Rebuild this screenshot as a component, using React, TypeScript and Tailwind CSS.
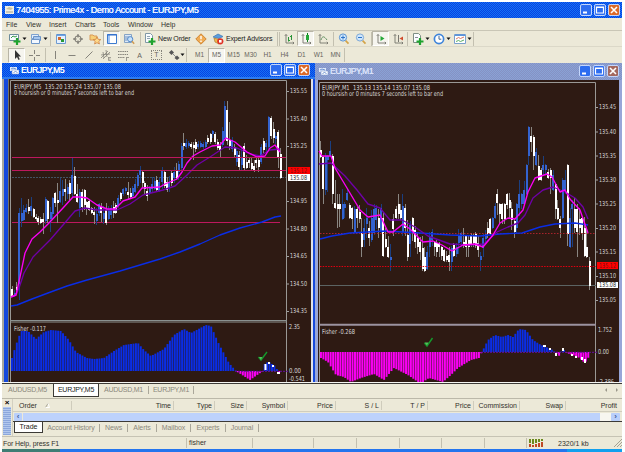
import type { ReactNode } from "react";
import clsx from "clsx";

type Point = [number, number];
// x, high, body top, body bottom, low, rising
type Candle = [number, number, number, number, number, 0 | 1];

const beige = "bg-[#ece9d8]";
const activeTitle =
  "bg-[repeating-conic-gradient(#0a3fe2_0_25%,#1274f4_0_50%)] bg-[length:2px_2px]";
const idleTitle = "bg-[repeating-conic-gradient(#8592c4_0_25%,#8aa2d6_0_50%)] bg-[length:2px_2px]";

const leftCandles: Candle[] = [
  [11.5, 286, 289, 296, 297, 0], [14, 290, 293, 296, 297, 1], [16.3, 282, 287, 290, 295, 0], [18.6, 208, 213, 284, 300, 1],
  [21, 198, 213, 221, 227, 1], [23.2, 205, 210, 220, 221, 1], [25.6, 204, 208, 212, 213, 1], [28, 199, 207, 211, 214, 0],
  [30.6, 197, 206, 211, 216, 1], [33, 208, 209, 217, 218, 0], [35.5, 214, 217, 219, 221, 0], [37.8, 216, 218, 222, 225, 0],
  [40.2, 217, 219, 223, 224, 0], [42.6, 213, 219, 222, 234, 0], [45, 197, 199, 221, 224, 1], [47.4, 200, 201, 219, 223, 0],
  [50, 207, 212, 219, 232, 1], [52.3, 197, 198, 214, 219, 1], [54.7, 192, 193, 203, 207, 0], [57.2, 183, 200, 203, 223, 0],
  [59.7, 178, 191, 202, 203, 1], [62.1, 180, 189, 196, 205, 1], [64.6, 179, 189, 192, 201, 0], [67, 184, 187, 194, 199, 1],
  [69.4, 180, 183, 194, 200, 0], [71.9, 158, 175, 193, 197, 1], [74.3, 167, 176, 194, 195, 0], [76.8, 184, 194, 202, 203, 0],
  [79.3, 189, 192, 208, 217, 1], [81.6, 189, 192, 207, 212, 0], [84, 189, 190, 205, 210, 0], [86.3, 201, 202, 208, 215, 0],
  [88.7, 200, 201, 210, 211, 0], [91.2, 207, 208, 213, 214, 0], [93.7, 207, 212, 215, 224, 0], [96.1, 208, 214, 221, 225, 1],
  [98.5, 203, 204, 213, 216, 1], [100.9, 203, 206, 213, 222, 0], [103.3, 206, 213, 219, 224, 1], [105.7, 203, 210, 223, 225, 0],
  [108.1, 206, 209, 219, 220, 1], [110.6, 205, 208, 215, 219, 1], [113, 201, 207, 213, 218, 0], [115.4, 203, 205, 213, 214, 0],
  [117.8, 195, 198, 206, 208, 1], [120.2, 192, 193, 199, 201, 0], [122.7, 188, 189, 194, 196, 1], [125.1, 187, 188, 191, 194, 1],
  [127.5, 182, 192, 195, 199, 0], [130, 188, 193, 197, 199, 0], [132.3, 186, 188, 196, 197, 1], [134.7, 179, 184, 192, 193, 1],
  [137.1, 173, 175, 186, 188, 1], [139.5, 166, 170, 175, 183, 1], [142, 171, 172, 183, 188, 0], [144.4, 181, 183, 189, 195, 0],
  [146.8, 185, 191, 196, 201, 0], [149.2, 186, 188, 193, 195, 1], [151.6, 177, 184, 189, 192, 1], [154, 177, 181, 189, 190, 1],
  [156.4, 176, 180, 190, 192, 0], [158.9, 178, 182, 191, 192, 1], [161.7, 167, 170, 182, 189, 1], [164.2, 170, 172, 186, 188, 0],
  [166.5, 177, 182, 190, 192, 0], [168.8, 176, 182, 188, 192, 1], [171.2, 171, 173, 183, 186, 0], [173.5, 167, 172, 178, 183, 1],
  [176, 163, 170, 178, 180, 0], [178.4, 161, 164, 172, 180, 1], [181.1, 143, 146, 168, 170, 1], [183.4, 133, 143, 146, 150, 0],
  [185.8, 139, 143, 147, 149, 1], [188.2, 141, 143, 146, 148, 1], [190.6, 142, 144, 147, 149, 0], [193, 142, 145, 148, 160, 0],
  [195.4, 139, 142, 149, 152, 0], [197.8, 141, 144, 147, 149, 1], [200.2, 141, 143, 147, 148, 1], [202.6, 142, 144, 147, 149, 1],
  [205, 140, 142, 147, 148, 1], [207.4, 135, 138, 142, 144, 0], [210, 133, 134, 142, 144, 0], [212.4, 130, 131, 134, 138, 1],
  [214.8, 132, 134, 142, 144, 0], [217.2, 139, 142, 148, 150, 0], [219.6, 142, 146, 150, 157, 0], [222, 127, 131, 145, 147, 1],
  [224.3, 101, 106, 138, 140, 1], [226.7, 101, 110, 141, 145, 0], [229.1, 122, 140, 146, 150, 0], [231.6, 137, 140, 149, 152, 1],
  [234, 144, 147, 155, 158, 0], [236.4, 148, 151, 162, 166, 1], [238.9, 151, 155, 167, 170, 0], [241.3, 147, 157, 165, 171, 1],
  [243.7, 143, 146, 168, 170, 0], [246.1, 155, 162, 168, 169, 0], [248.5, 157, 160, 163, 168, 0], [251, 157, 163, 169, 171, 0],
  [253.5, 160, 166, 170, 172, 0], [255.9, 157, 160, 163, 168, 0], [258.3, 156, 160, 167, 172, 0], [260.8, 144, 147, 162, 164, 1],
  [263.3, 138, 141, 150, 153, 0], [265.7, 140, 143, 147, 154, 1], [268.2, 116, 117, 147, 149, 1], [270.6, 116, 118, 136, 139, 0],
  [273, 122, 129, 138, 143, 0], [275.4, 132, 136, 139, 144, 1], [277.7, 130, 132, 158, 168, 0], [280.2, 148, 154, 178, 179, 0],
];

const rightCandles: Candle[] = [
  [320.2, 141, 150, 157, 158, 0], [322.6, 156, 157, 189, 204, 0], [325, 153, 156, 190, 195, 1], [327.4, 155, 156, 160, 192, 1],
  [329.7, 141, 151, 156, 157, 1], [332.1, 154, 156, 194, 204, 0], [334.6, 180, 203, 208, 209, 0], [337, 194, 204, 209, 228, 0],
  [339.4, 194, 204, 209, 227, 0], [342, 189, 204, 219, 220, 1], [344.4, 202, 204, 208, 218, 1], [346.8, 189, 193, 200, 201, 1],
  [349.2, 203, 205, 218, 219, 0], [351.6, 207, 208, 219, 229, 0], [354.2, 206, 209, 232, 233, 1], [356.6, 207, 209, 218, 228, 0],
  [359, 205, 212, 219, 223, 0], [361.3, 218, 233, 247, 257, 0], [363.8, 219, 228, 240, 247, 1], [366.2, 208, 218, 224, 238, 1],
  [368.7, 221, 228, 238, 246, 0], [371.1, 210, 218, 240, 242, 1], [373.5, 204, 209, 233, 235, 1], [375.9, 205, 208, 220, 229, 1],
  [378.3, 209, 218, 228, 238, 0], [380.5, 204, 208, 232, 233, 1], [382.9, 212, 218, 256, 257, 0], [385.3, 228, 239, 247, 248, 0],
  [387.8, 236, 247, 257, 258, 0], [390.4, 244, 257, 260, 271, 1], [392.8, 214, 219, 229, 236, 0], [395.6, 206, 209, 218, 219, 0],
  [398, 194, 204, 214, 219, 0], [400.2, 204, 210, 218, 220, 0], [402.4, 194, 206, 232, 236, 1], [404.9, 204, 208, 228, 236, 0],
  [407.4, 220, 235, 257, 261, 0], [409.8, 221, 225, 244, 257, 1], [412.3, 217, 218, 233, 241, 0], [414.7, 226, 230, 242, 248, 0],
  [417.1, 232, 238, 247, 254, 0], [419.5, 237, 242, 252, 260, 0], [422, 236, 248, 269, 271, 0], [424.4, 247, 257, 271, 272, 0],
  [426.8, 246, 252, 269, 270, 1], [429.2, 232, 237, 247, 257, 1], [431.6, 229, 232, 240, 246, 1], [434, 241, 242, 247, 256, 0],
  [436.4, 240, 243, 252, 257, 0], [438.8, 242, 243, 247, 257, 0], [441.2, 246, 247, 256, 260, 0], [443.6, 249, 250, 261, 262, 0],
  [446, 251, 256, 260, 262, 0], [448.6, 247, 255, 262, 271, 0], [451, 246, 248, 262, 271, 1], [453.4, 243, 245, 256, 257, 0],
  [456, 243, 247, 254, 257, 1], [458.4, 229, 235, 243, 254, 1], [460.8, 232, 233, 242, 247, 1], [463.3, 228, 242, 246, 248, 0],
  [465.7, 235, 236, 247, 257, 0], [468.2, 235, 240, 247, 257, 0], [470.6, 233, 235, 245, 247, 0], [473, 233, 236, 243, 247, 0],
  [475.4, 232, 234, 246, 248, 0], [477.8, 236, 243, 250, 257, 0], [480.1, 252, 256, 260, 271, 1], [482.6, 234, 238, 248, 257, 1],
  [485, 230, 234, 239, 244, 1], [487.3, 222, 228, 234, 238, 0], [489.7, 218, 219, 234, 235, 0], [492.1, 217, 218, 228, 229, 1],
  [494.5, 203, 206, 218, 219, 1], [496.9, 189, 194, 203, 215, 0], [499.3, 203, 204, 214, 224, 0], [501.7, 203, 204, 219, 224, 0],
  [504.1, 203, 204, 219, 224, 0], [506.6, 193, 194, 205, 209, 0], [509, 193, 200, 208, 218, 0], [511.4, 202, 209, 220, 230, 0],
  [514, 219, 221, 232, 238, 0], [516.4, 203, 204, 228, 234, 1], [518.8, 180, 194, 208, 216, 1], [521.2, 193, 194, 204, 209, 1],
  [523.6, 181, 190, 204, 206, 1], [526, 164, 165, 194, 195, 1], [528.4, 126, 127, 156, 165, 1], [530.8, 127, 136, 142, 152, 0],
  [533.2, 135, 137, 156, 170, 0], [535.7, 148, 152, 165, 166, 1], [538.1, 155, 166, 180, 181, 0], [540.5, 168, 170, 180, 181, 0],
  [542.9, 156, 165, 170, 175, 1], [545.3, 164, 165, 170, 175, 1], [547.8, 169, 172, 178, 179, 0], [550.2, 168, 170, 178, 194, 0],
  [552.6, 170, 175, 190, 191, 1], [555, 183, 184, 209, 219, 0], [557.4, 200, 208, 219, 220, 0], [559.8, 216, 219, 228, 238, 0],
  [562.3, 178, 180, 218, 219, 1], [564.7, 170, 180, 190, 194, 1], [567.1, 164, 165, 234, 246, 0], [569.5, 208, 218, 247, 248, 1],
  [571.9, 200, 204, 209, 247, 1], [574.3, 198, 209, 228, 233, 0], [576.7, 204, 209, 232, 257, 0], [579.1, 208, 219, 228, 235, 0],
  [581.5, 217, 218, 233, 240, 0], [584, 217, 228, 256, 257, 0], [586.4, 228, 247, 257, 258, 0], [589, 257, 261, 286, 290, 0],
];

const leftFast: Point[] = [[11, 297], [16, 295], [20, 277], [25, 253], [32, 239], [40, 232], [48, 224], [63, 208], [73, 197], [80, 197], [87, 198], [97, 205], [107, 209], [115, 209], [123, 201], [135, 197], [142, 188], [160, 187], [165, 184], [177, 179], [182, 172], [187, 163], [193, 156], [200, 152], [212, 146], [220, 145], [226, 138], [235, 142], [247, 152], [257, 157], [265, 156], [270, 148], [275, 145], [280, 152]];
const leftSlow: Point[] = [[11, 297], [16, 295], [19, 288], [24, 273], [33, 257], [50, 240], [63, 225], [75, 211], [85, 208], [97, 210], [117, 210], [130, 204], [143, 195], [163, 190], [175, 186], [187, 175], [197, 165], [210, 157], [225, 147], [237, 148], [250, 154], [260, 156], [270, 150], [280, 149]];
const leftTrend: Point[] = [[11, 306], [17, 305], [32, 299], [48, 293], [67, 286], [87, 280], [120, 271], [160, 259], [180, 252], [200, 244], [220, 235], [240, 228], [262, 222], [275, 217], [281, 216]];

const rightFast: Point[] = [[319, 151], [322, 156], [331, 156], [335, 168], [347, 188], [360, 210], [368, 217], [380, 215], [388, 232], [393, 232], [403, 224], [410, 229], [417, 236], [423, 242], [433, 241], [442, 245], [452, 251], [463, 245], [475, 244], [483, 247], [493, 235], [500, 223], [508, 218], [515, 219], [523, 210], [528, 192], [535, 178], [547, 174], [552, 177], [560, 192], [565, 190], [570, 199], [580, 210], [588, 233]];
const rightSlow: Point[] = [[319, 164], [331, 163], [345, 176], [357, 190], [368, 204], [380, 208], [390, 220], [402, 220], [415, 227], [428, 236], [450, 244], [470, 245], [484, 244], [497, 232], [508, 227], [518, 223], [525, 215], [533, 198], [543, 190], [553, 187], [565, 192], [575, 198], [583, 207], [588, 219]];
const rightTrend: Point[] = [[320, 239], [332, 236], [350, 233], [385, 231], [420, 233], [450, 235], [480, 236], [500, 234], [522, 233], [540, 227], [555, 224], [575, 223], [588, 225]];

const leftFisher: Point[] = [[11, 358], [15, 345], [20, 331], [27, 331], [35, 339], [43, 332], [50, 330], [60, 331], [68, 340], [75, 352], [86, 358], [93, 359], [103, 358], [113, 351], [123, 345], [137, 343], [143, 350], [150, 356], [163, 349], [173, 335], [183, 329], [190, 333], [205, 325], [210, 326], [217, 342], [228, 363], [235, 371], [249, 380], [262, 371], [264, 363], [268, 362], [274, 366], [277, 371], [280, 374]];
const rightFisher: Point[] = [[320, 358], [327, 362], [335, 375], [343, 377], [350, 382], [360, 378], [373, 374], [383, 380], [393, 368], [407, 375], [417, 382], [422, 382], [428, 378], [442, 382], [450, 375], [457, 368], [470, 360], [478, 358], [481, 352], [487, 340], [494, 335], [501, 337], [507, 335], [512, 337], [518, 329], [525, 330], [532, 340], [540, 345], [550, 349], [554, 352], [558, 356], [562, 349], [566, 353], [577, 357], [584, 363], [589, 355]];

function levelAt(points: Point[], x: number) {
  const i = points.findIndex(([px]) => px >= x);
  if (i < 0) return points[points.length - 1][1];
  if (i === 0) return points[0][1];
  const [x0, y0] = points[i - 1];
  const [x1, y1] = points[i];
  return y0 + ((y1 - y0) * (x - x0)) / (x1 - x0);
}

function Candles({ data }: { data: Candle[] }) {
  return (
    <g shapeRendering="crispEdges">
      {data.map(([x, high, top, bottom, low, up]) => (
        <g key={x}>
          <rect x={x} y={high} width={1} height={low - high} fill={up ? "#1b3f80" : "#8a8681"} />
          <rect x={x - 0.5} y={top} width={2} height={bottom - top} fill={up ? "#3463cf" : "#ffffff"} />
        </g>
      ))}
    </g>
  );
}

function Line({ points, color }: { points: Point[]; color: string }) {
  return <polyline points={points.join(" ")} fill="none" stroke={color} strokeWidth={1.35} strokeLinejoin="round" />;
}

function Fisher({ points, base }: { points: Point[]; base: number }) {
  const first = points[0][0];
  const last = points[points.length - 1][0];
  const count = Math.floor((last - first) / 2.43) + 1;
  return (
    <g>
      {Array.from({ length: count }, (_, i) => {
        const x = first + i * 2.43;
        const y = levelAt(points, x);
        return (
          <rect
            key={i}
            x={x}
            y={Math.min(y, base)}
            width={1.95}
            height={Math.max(Math.abs(base - y), 0.6)}
            fill={y > base ? "#fb00f5" : "#0a2de6"}
          />
        );
      })}
    </g>
  );
}

function Label({ x, y, w, children, fill = "#d6d6d6" }: { x: number; y: number; w: number; children: string; fill?: string }) {
  return (
    <text x={x} y={y + 2.4} textLength={w} lengthAdjust="spacingAndGlyphs" fill={fill} fontSize={6.8} xmlSpace="preserve">
      {children}
    </text>
  );
}

function Tick({ y, x }: { y: number; x: number }) {
  return <rect x={x} y={y} width={2} height={1} fill="#a0a0a0" />;
}

const chartFont = "block shrink-0 font-['DejaVu_Sans_Condensed','DejaVu_Sans',sans-serif]";

function LeftChart() {
  const prices: [string, number][] = [
    ["135.55", 91], ["135.40", 118.5], ["135.25", 146], ["134.95", 201], ["134.80", 228.5], ["134.65", 256], ["134.50", 283.5], ["134.35", 311],
  ];
  return (
    <svg width={302} height={303} viewBox="9 79 302 303" className={chartFont}>
      <rect x={9} y={79} width={302} height={303} fill="#2e1a13" />
      <path d="M10.5 382V80.5H286.5V382" fill="none" stroke="#9a9895" />
      <path d="M10 320.5H287M10 322H287" stroke="#8b9190" />
      <path d="M12 157.5H286M12 170.5H286M12 222.5H280" stroke="#bd185e" />
      <path d="M12 177.5H286" stroke="#425363" strokeDasharray="2 1" />
      <Candles data={leftCandles} />
      <Line points={leftTrend} color="#0a2de6" />
      <Line points={leftSlow} color="#6f00a8" />
      <Line points={leftFast} color="#fb00f5" />
      <path d="M180 157.5H286M160 170.5H286" stroke="#bd185e" />
      <Fisher points={leftFisher} base={371} />
      <path d="M235 371.3H288" stroke="#6310a0" strokeDasharray="2 1" />
      <path d="M264.5 364h2v6h-2zM268 362h2v2h-2zM272 365h2v2h-2zM277 372h3v2h-3z" fill="#fff" />
      <path d="M258.5 357l2.5 3 6-8" fill="none" stroke="#149a2c" strokeWidth={1.4} />
      <path d="M259 357l2 3 1.2-3z" fill="#55c45d" />
      {prices.map(([text, y]) => (
        <g key={text}>
          <Tick x={287} y={y} />
          <Label x={290} y={y} w={17}>{text}</Label>
        </g>
      ))}
      <rect x={288} y={167} width={22} height={7} fill="#ff0000" />
      <Label x={290} y={170.5} w={17} fill="#7a1010">135.12</Label>
      <rect x={288} y={174} width={22} height={7} fill="#ffffff" />
      <Label x={290} y={177.5} w={17} fill="#303030">135.08</Label>
      <Label x={289} y={326.5} w={11}>2.35</Label>
      <Label x={289} y={371} w={12}>0.00</Label>
      <Label x={289} y={378.5} w={16}>-0.541</Label>
      <Label x={14} y={86.5} w={107}>EURJPY,M5  135.20 135.24 135.07 135.08</Label>
      <Label x={14} y={93} w={120}>0 hoursish or 0 minutes 7 seconds left to bar end</Label>
      <Label x={14} y={328.5} w={32}>Fisher -0.117</Label>
    </svg>
  );
}

function RightChart() {
  const prices: [string, number][] = [
    ["135.45", 107], ["135.40", 131.5], ["135.35", 155.5], ["135.30", 179.5], ["135.25", 203.5], ["135.20", 228], ["135.15", 251.5], ["135.10", 276], ["135.05", 300],
  ];
  return (
    <svg width={301} height={302} viewBox="318 80 301 302" className={chartFont}>
      <rect x={318} y={80} width={301} height={302} fill="#2e1a13" />
      <path d="M319.5 382V82.5H595.5V382" fill="none" stroke="#9a9895" />
      <path d="M320 324.7H596" stroke="#9c93a0" strokeWidth={2} />
      <path d="M320 285.5H596" stroke="#5c6463" />
      <Candles data={rightCandles} />
      <path d="M320 233.5H596" stroke="#a8232c" strokeDasharray="1.5 1.5" />
      <path d="M320 266.5H596" stroke="#e00010" strokeDasharray="1.5 1.2" />
      <Line points={rightTrend} color="#0a2de6" />
      <Line points={rightSlow} color="#6f00a8" />
      <Line points={rightFast} color="#fb00f5" />
      <Fisher points={rightFisher} base={352} />
      <path d="M481 352.3H598" stroke="#6310a0" strokeDasharray="2 1" />
      <path d="M543 345h3v2h-3zM549 348h2v2h-2zM555 353h2v3h-2zM562 348h2v3h-2zM571 354h2v2h-2zM575 356h2v2h-2zM581 357h2v3h-2zM584 359h2v4h-2z" fill="#fff" />
      <path d="M424.5 343l2.5 3 5.5-8" fill="none" stroke="#149a2c" strokeWidth={1.4} />
      <path d="M424.5 342.5l2.5 3 1.5-3z" fill="#55c45d" />
      {prices.map(([text, y]) => (
        <g key={text}>
          <Tick x={596} y={y} />
          <Label x={599} y={y} w={17}>{text}</Label>
        </g>
      ))}
      <rect x={597} y={262} width={21} height={7} fill="#ff0000" />
      <Label x={599} y={265.5} w={17} fill="#7a1010">135.12</Label>
      <rect x={597} y={282} width={21} height={6} fill="#ffffff" />
      <Label x={599} y={285} w={17} fill="#303030">135.08</Label>
      <Label x={598} y={330} w={14}>1.752</Label>
      <Label x={598} y={351.5} w={11}>0.00</Label>
      <Label x={598} y={381.8} w={16}>-2.386</Label>
      <Label x={322} y={87.5} w={108}>EURJPY,M1  135.13 135.14 135.07 135.08</Label>
      <Label x={322} y={94} w={121}>0 hoursish or 0 minutes 7 seconds left to bar end</Label>
      <Label x={322} y={332} w={33}>Fisher -0.268</Label>
    </svg>
  );
}

function WindowButtons({ idle = false }: { idle?: boolean }) {
  const box = "h-3 w-3 rounded-[2px] border border-[#c4d6fb]";
  return (
    <div className="ml-auto flex gap-[2px]">
      <svg viewBox="0 0 10 10" className={clsx(box, "bg-[#2d6df0]")}>
        <path d="M2 7.5h4" stroke="#fff" strokeWidth={2} />
      </svg>
      <svg viewBox="0 0 10 10" className={clsx(box, "bg-[#2d6df0]")}>
        <path d="M1.500 2h7v6h-7zM1 2.500h8" fill="none" stroke="#fff" strokeWidth={1.2} />
      </svg>
      <svg viewBox="0 0 10 10" className={clsx(box, idle ? "bg-[#a3685f]" : "bg-[#dc6a28]")}>
        <path d="M2 2l6 6M8 2l-6 6" stroke="#fff" strokeWidth={1.6} />
      </svg>
    </div>
  );
}

function ChartIcon() {
  return (
    <svg viewBox="0 0 9 9" className="h-[9px] w-[9px]">
      <path d="M0 1h7v4H0z" fill="#dfe9fb" />
      <path d="M2 4h7v4H2z" fill="#fff" stroke="#7f9bd0" strokeWidth={0.6} />
      <path d="M1 3l2-1 3 1M3.5 6.5l2-1 2 1" fill="none" stroke="#4d78c4" strokeWidth={0.8} />
    </svg>
  );
}

function Icon({ children }: { children: ReactNode }) {
  return (
    <svg viewBox="0 0 12 12" fill="none" className="h-3 w-3 shrink-0">
      {children}
    </svg>
  );
}

function Slot({ children, pressed = false }: { children: ReactNode; pressed?: boolean }) {
  return (
    <div
      className={clsx(
        "flex h-[15px] w-[17px] shrink-0 items-center justify-center",
        pressed && "border border-[#b8b5a6] border-r-white border-b-white bg-[#f6f5ef]",
      )}
    >
      {children}
    </div>
  );
}

function Caret({ className }: { className?: string }) {
  return (
    <svg viewBox="0 0 5 4" className={clsx("h-1 w-[5px] shrink-0", className ?? "ml-px")}>
      <path d="M.5 .5h4L2.500 3z" fill="#111" />
    </svg>
  );
}

function Sep({ className }: { className?: string }) {
  return <div className={clsx("h-[14px] w-px shrink-0 bg-[#c3c0b0]", className)} />;
}

const plus = <path d="M8 5v7M4.5 8.5h7" stroke="#1fa32e" strokeWidth={2.2} />;
const axes = <path d="M3 1.500v8.500h8M1.800 2.800L3 1.500l1.200 1.300M9.800 8.800L11 10l-1.200 1.200" stroke="#77766e" strokeWidth={0.9} />;

function MainToolbar() {
  return (
    <div className="flex h-4 items-center border-t border-[#c9c6b6] pl-[7px]">
      <Icon><path d="M.5 1.5h9v6h-9z" fill="#f7fbff" stroke="#6d8c9c" /><path d="M2 5l2-2 2 1 2-1" stroke="#3a9a4a" />{plus}</Icon>
      <Caret />
      <div className="w-[3px]" />
      <Icon><path d="M1.500 1.500h7v4h-7z" fill="#e3eefb" stroke="#7ea2cf" /><path d="M3.500 3.500h7v4h-7z" fill="#a6c6ee" stroke="#6b94c8" /><path d="M1.5 6.5h8v4h-8z" fill="#f3f8ff" stroke="#6e96c8" /></Icon>
      <Caret />
      <Sep className="mr-px ml-[2px]" />
      <Slot><Icon><path d="M1.5 1.5h9v9h-9z" fill="#e4f0ff" stroke="#6f9bd0" /><path d="M2 2.2h8" stroke="#3b80d6" /><path d="M3 4h3v3H3z" fill="#d36b2c" /><path d="M6 6h3v3H6z" fill="#269936" /></Icon></Slot>
      <Slot><Icon><circle cx={6} cy={6} r={3.2} stroke="#77756e" /><path d="M6 1v3.500M6 7.500V11M1 6h3.500M7.500 6H11" stroke="#66645e" /></Icon></Slot>
      <Slot><Icon><path d="M1 2h3l1 1h3v4H1z" fill="#f7cf77" stroke="#d99a58" /><path d="M8 4l1.2 2.3 2.6.3-2 1.7.6 2.7L8 9.7 5.6 11l.6-2.7-2-1.7 2.6-.3z" fill="#ffd98a" stroke="#cf8240" strokeWidth={0.8} /></Icon></Slot>
      <Slot pressed><Icon><path d="M1.500 1.500h9v9h-9z" fill="#fff" stroke="#3d7bd0" /><path d="M2 2h2v8H2z" fill="#9fc3f5" /><path d="M1 2h10" stroke="#2f6dcc" /></Icon></Slot>
      <Slot><Icon><path d="M1.5 1.5h7v8h-7z" fill="#dce9f8" stroke="#85a3c5" /><path d="M3 3v5M5 3v4" stroke="#7093bd" /><circle cx={7.2} cy={6.2} r={2.6} fill="#c6e1fa" stroke="#5288c8" /><path d="M9 8.3l2.2 2.5" stroke="#cf9950" strokeWidth={1.5} /></Icon></Slot>
      <Sep className="mr-[3px] ml-[3px]" />
      <Icon><path d="M1.5.5h5l2 2v7h-7z" fill="#fafdff" stroke="#8198a6" /><path d="M3 3.5h3M3 5.5h3" stroke="#91a5b5" />{plus}</Icon>
      <span className="ml-[2px] w-[34px] text-[#222] tracking-[-0.15px]">New Order</span>
      <Slot><Icon><path d="M6 .8l5.2 5.2L6 11.2.8 6z" fill="#f0ac54" stroke="#cf8636" /><path d="M6 3v3.2M6 7.5V9" stroke="#fff" strokeWidth={1.4} /></Icon></Slot>
      <Slot><Icon><path d="M1 4l5-3 5 2.5-4 2z" fill="#5c9edd" stroke="#3a74b4" strokeWidth={0.7} /><path d="M2 5l5 1.5V11L3 9z" fill="#f0b64c" stroke="#a97c33" strokeWidth={0.7} /><circle cx={8.3} cy={8.3} r={3.1} fill="#df3227" /><path d="M7 7h2.6v2.6H7z" fill="#fff" /></Icon></Slot>
      <span className="w-[51px] text-[#222] tracking-[-0.15px]">Expert Advisors</span>
      <Sep /><Sep className="ml-px" />
      <Slot><Icon>{axes}<path d="M5.500 4v4.500M5.500 7.500H7M8.500 2v5M7 3.500h1.500" stroke="#2a9438" /></Icon></Slot>
      <Slot pressed><Icon>{axes}<path d="M7.500 0v9" stroke="#0d7e1d" /><path d="M6 2h3v5H6z" fill="#25a838" /></Icon></Slot>
      <Slot><Icon>{axes}<path d="M4 7c1.500-4.500 3-4 6 0" stroke="#679366" /></Icon></Slot>
      <Sep className="mr-px ml-[2px]" />
      <Slot><Icon><path d="M7.500 7.500l3 3.200" stroke="#d3a348" strokeWidth={1.800} /><circle cx={5} cy={4.500} r={3.600} fill="#cfe6fb" stroke="#5b93d2" /><path d="M5 2.500v4M3 4.500h4" stroke="#2c74c9" /></Icon></Slot>
      <Slot><Icon><path d="M7.500 7.500l3 3.200" stroke="#d3a348" strokeWidth={1.800} /><circle cx={5} cy={4.500} r={3.600} fill="#cfe6fb" stroke="#7fa9d6" /><path d="M3 4.500h4" stroke="#2c74c9" /></Icon></Slot>
      <Sep className="ml-[2px]" />
      <Slot pressed><Icon>{axes}<path d="M5.500 3v5l4-2.500z" fill="#25a838" /></Icon></Slot>
      <Slot><Icon>{axes}<path d="M6.500 2v7" stroke="#77766e" /><path d="M11 3.500v4L7.500 5.500z" fill="#d04c2c" /></Icon></Slot>
      <Sep className="mr-[4px] ml-px" />
      <Icon><path d="M1.500.5h5l2 2v7h-7z" fill="#fafdff" stroke="#7f8f85" /><path d="M3 4.500h3" stroke="#889" />{plus}</Icon>
      <Caret />
      <div className="w-[3px]" />
      <Icon><circle cx={6} cy={6} r={4.600} fill="#fff" stroke="#3f85da" strokeWidth={1.700} /><path d="M6 3v3.200h2.300" stroke="#44678f" /></Icon>
      <Caret />
      <div className="w-[3px]" />
      <Icon><path d="M.5 1.500h11v9H.5z" fill="#fff" stroke="#7aa0cc" /><path d="M1 2.200h10" stroke="#5590dc" strokeWidth={1.500} /><path d="M2 6l2.500-1.500 2 1L10 4" stroke="#d97a68" /><path d="M2 8.500L4.500 7.500l2 1L10 7" stroke="#5cae66" /></Icon>
      <Caret />
      <Sep className="ml-px" />
    </div>
  );
}

function DrawToolbar() {
  const frames = ["M1", "M5", "M15", "M30", "H1", "H4", "D1", "W1", "MN"];
  const gray = "#85837b";
  return (
    <div className="flex h-[17px] items-center border-t border-[#dbd8c8] pl-[6px] text-[#66645c]">
      <Slot pressed><Icon><path d="M4 1v9l2-2 1.500 3 1.300-.7L7.400 7.500H10z" fill="#333" /></Icon></Slot>
      <Slot><Icon><path d="M6.500 1v4M6.500 8v4M1 6.500h4M8 6.500h4" stroke={gray} /></Icon></Slot>
      <Sep className="mr-0 ml-[3px]" />
      <Slot><Icon><path d="M6.500 2v8" stroke={gray} /></Icon></Slot>
      <Slot><Icon><path d="M2.500 6.500h7" stroke={gray} /></Icon></Slot>
      <Slot><Icon><path d="M2.500 9.500l7-7" stroke={gray} /></Icon></Slot>
      <Slot><Icon><path d="M1 9l7-7M3 10l7-7M3 3l1 6M6 1l1 7M1 6l9-1" stroke={gray} strokeWidth={0.8} /><path d="M8.500 8v3.500M8.500 8.500h2.500M8.500 10h2M8.500 11.500h2.500" stroke={gray} strokeWidth={0.7} /></Icon></Slot>
      <Slot><Icon><path d="M1 2.500h10M1 5.500h10M1 8.500h7" stroke={gray} strokeDasharray="1.500 .7" /><path d="M9.500 8v4M9.500 8.500H12" stroke={gray} strokeWidth={0.800} /></Icon></Slot>
      <Slot>A</Slot>
      <Slot><span className="border border-dotted border-[#85837b] px-[2px] leading-[8px]">T</span></Slot>
      <Slot><Icon><path d="M1 3.500L3.500 1 6 3.500 3.500 6z" fill="#555" /><path d="M5 5l3 3" stroke="#888" /><path d="M6.500 9L9 6.500 11.500 9 9 11z" fill="#555" /></Icon></Slot>
      <Caret className="-ml-[2px]" />
      <Sep className="mr-[4px] ml-px" />
      {frames.map((frame) => (
        <Slot key={frame} pressed={frame === "M5"}>
          <span className="text-[6.500px] tracking-[-0.1px]">{frame}</span>
        </Slot>
      ))}
      <Sep />
    </div>
  );
}

const menus: [string, string][] = [
  ["File", "w-5"], ["View", "w-[23px]"], ["Insert", "w-[26px]"], ["Charts", "w-[28px]"], ["Tools", "w-[25px]"], ["Window", "w-[33px]"], ["Help", "w-5"],
];

const columns: [string, string][] = [
  ["Time", "w-[102px]"], ["Type", "w-[41px]"], ["Size", "w-8"], ["Symbol", "w-[41px]"], ["Price", "w-12"], ["S / L", "w-[46px]"],
  ["T / P", "w-[46px]"], ["Price", "w-[46px]"], ["Commission", "w-[46px]"], ["Swap", "w-[46px]"], ["Profit", "w-[55px]"],
];

const terminalTabs: [string, string][] = [
  ["Account History", "w-[57px]"], ["News", "w-[28px]"], ["Alerts", "w-[29px]"], ["Mailbox", "w-[34px]"], ["Experts", "w-[35px]"], ["Journal", "w-[33px]"],
];

function ChartTabs() {
  return (
    <div className="flex h-[15px] items-start border-t border-[#3c3a36] text-[7px] text-[#8b887c]">
      <div className="h-3 w-[51px] text-center leading-3 tracking-[-0.25px]">AUDUSD,M5</div>
      <div className="h-[13px] w-[46px] border-x border-b border-[#3c3a36] bg-white text-center leading-3 tracking-[-0.25px] text-[#222]">EURJPY,M5</div>
      <div className="h-3 w-[49px] text-center leading-3 tracking-[-0.25px]">AUDUSD,M1</div>
      <div className="mt-[2px] h-2 w-[46px] border-x border-[#aaa79a] text-center leading-2 tracking-[-0.25px]">EURJPY,M1</div>
      <svg viewBox="0 0 16 6" className="mt-[3px] mr-[2px] ml-auto h-[6px] w-4">
        <path d="M3 1v4L1 3zM12 1v4l2-2z" fill="#9a978a" />
      </svg>
    </div>
  );
}

function Terminal() {
  return (
    <div className="flex h-[38px] border-t border-[#bbb8a9] text-[7px]">
      <div className="flex w-[10px] flex-col items-center">
        <span className="h-2 text-[8px] leading-2 font-bold text-black">×</span>
        <div className="h-[28px] w-2 bg-[repeating-linear-gradient(0deg,#8ba7dc_0_1px,#b2c8ee_1px_2px)]" />
      </div>
      <div className="flex grow flex-col border-l border-[#d3d0c0]">
        <div className="flex h-[13px] items-center border-b border-[#d0cdbd] text-[#33312c]">
          <div className="flex w-[59px] items-center gap-2 border-r border-[#cfccbc] pl-[6px] leading-[9px]">
            Order
            <svg viewBox="0 0 5 5" className="h-[5px] w-[5px]">
              <path d="M.5 4.500L3 .5" stroke="#a6a396" />
              <path d="M3 .5l1.500 4h-4" fill="none" stroke="#fff" />
            </svg>
          </div>
          {columns.map(([name, width], i) => (
            <div key={i} className={clsx(width, "shrink-0 border-r border-[#cfccbc] pr-[2px] text-right leading-[9px]", i === 10 && "border-r-0 pr-[4px]")}>
              {name}
            </div>
          ))}
        </div>
        <div className="flex h-[10px] items-center border-b-[1.5px] border-[#3c3a36] pl-px">
          <div className="h-2 w-[8px] rounded-[1px] bg-[#b9cffb] text-center text-[8px] leading-[7px] font-bold text-[#42609a]">‹</div>
          <div className="ml-px h-2 grow bg-[#bdd2fc]" />
          <div className="h-2 w-[11px] bg-[#f7f6f0]" />
          <div className="mr-[2px] h-2 w-[9px] rounded-[1px] bg-[#b9cffb] text-center text-[8px] leading-[7px] font-bold text-[#42609a]">›</div>
        </div>
        <div className="flex h-[14px] items-start pl-px text-[#8b887c]">
          <div className="h-[11px] w-[29px] border-x border-b border-[#3c3a36] bg-white text-center leading-[10px] text-[#222]">Trade</div>
          {terminalTabs.map(([name, width]) => (
            <div key={name} className={clsx(width, "mt-[2px] h-2 shrink-0 border-r border-[#aaa79a] text-center leading-2 tracking-[-0.1px]")}>
              {name}
            </div>
          ))}
        </div>
      </div>
    </div>
  );
}

function StatusBar() {
  const cell = "h-[10px] border-l border-[#c3c0b0]";
  return (
    <div className="flex h-[13px] items-center border-t border-[#c6c3b4] text-[7px] text-[#33312c]">
      <div className="w-[184px] pl-px tracking-[-0.1px]">For Help, press F1</div>
      <div className={clsx(cell, "w-[66px] pl-[2px] leading-[10px]")}>fisher</div>
      <div className={clsx(cell, "w-[61px]")} />
      <div className={clsx(cell, "w-[43px]")} />
      <div className={clsx(cell, "w-[43px]")} />
      <div className={clsx(cell, "w-[42px]")} />
      <div className={clsx(cell, "w-[43px]")} />
      <div className={clsx(cell, "w-[42px]")} />
      <div className={clsx(cell, "flex grow items-center pl-[2px]")}>
        <svg viewBox="0 0 15 8" className="h-2 w-[15px]" shapeRendering="crispEdges">
          <path d="M0 0h2v4H0zM3 0h2v5H3zM6 0h2v4H6zM9 0h2v3H9zM12 0h2v2h-2z" fill="#6c8a1d" />
          <path d="M0 5h2v3H0zM3 6h2v2H3zM6 5h2v3H6zM9 4h2v4H9zM12 3h2v5h-2z" fill="#bf4a26" />
        </svg>
        <span className="ml-[14px]">2320/1 kb</span>
        <svg viewBox="0 0 8 8" className="ml-auto h-2 w-2">
          <path d="M0 8l8-8M3 8l5-5M6 8l2-2" stroke="#a5a293" />
        </svg>
      </div>
    </div>
  );
}

export default function App() {
  return (
    <div className="h-[452px] w-[625px] overflow-hidden bg-white pt-[2px] pr-[3px] pl-[2px] font-['Liberation_Sans',Arial,sans-serif] text-[7px] leading-none whitespace-nowrap text-[#33312c]">
      <div className={clsx("flex h-full flex-col", beige)}>
        <header className={clsx("flex h-4 shrink-0 items-center pr-[2px] pl-[3px]", activeTitle)}>
          <svg viewBox="0 0 9 10" className="h-[10px] w-[9px]">
            <path d="M0 1h9v8H0z" fill="#f1efe3" />
            <path d="M1 4l3-2 4 1-2 2z" fill="#c9c29f" />
            <path d="M1 7h7" stroke="#a3a08c" />
          </svg>
          <span className="ml-[2px] text-[9px] tracking-[-0.34px] text-[#eef4ff] [text-shadow:0.3px_0_0_white]">
            7404955: Prime4x - Demo Account - EURJPY,M5
          </span>
          <WindowButtons />
        </header>

        <nav className="flex h-3 shrink-0 items-center pl-1">
          {menus.map(([name, width]) => (
            <span key={name} className={width}>{name}</span>
          ))}
        </nav>

        <MainToolbar />
        <DrawToolbar />

        <main className="flex h-[320px] shrink-0 border-b border-[#f4f4f0]">
          <section className="flex w-[313px] flex-col bg-[#1549dc]">
            <div className={clsx("flex h-4 shrink-0 items-center border-b-2 border-[#2d7cf0] pr-[5px] pl-2", activeTitle)}>
              <ChartIcon />
              <span className="ml-[2px] text-[8.500px] tracking-[-0.4px] text-white [text-shadow:0.3px_0_0_white]">EURJPY,M5</span>
              <WindowButtons />
            </div>
            <div className="flex grow border-l-2 border-[#aaa89c] pl-1">
              <div className="w-px bg-[#777466]" />
              <LeftChart />
              <div className="w-[2px] bg-[#dfe2e8]" />
            </div>
          </section>
          <section className="flex w-[307px] flex-col bg-[#98a6d8]">
            <div className={clsx("flex h-[17px] shrink-0 items-center pr-[3px] pb-px pl-[4px]", idleTitle)}>
              <ChartIcon />
              <span className="ml-[2px] text-[8.500px] tracking-[-0.4px] text-[#dce3fa] [text-shadow:0.3px_0_0_#dce3fa]">EURJPY,M1</span>
              <WindowButtons idle />
            </div>
            <div className="flex grow pl-[3px]">
              <RightChart />
            </div>
          </section>
        </main>

        <ChartTabs />
        <Terminal />
        <StatusBar />
        <div className="flex grow bg-[#2475ee]">
          <div className="w-[58px] bg-[#3f7d74]" />
          <div className="ml-auto w-[55px] bg-[#12a0ee]" />
        </div>
      </div>
    </div>
  );
}
